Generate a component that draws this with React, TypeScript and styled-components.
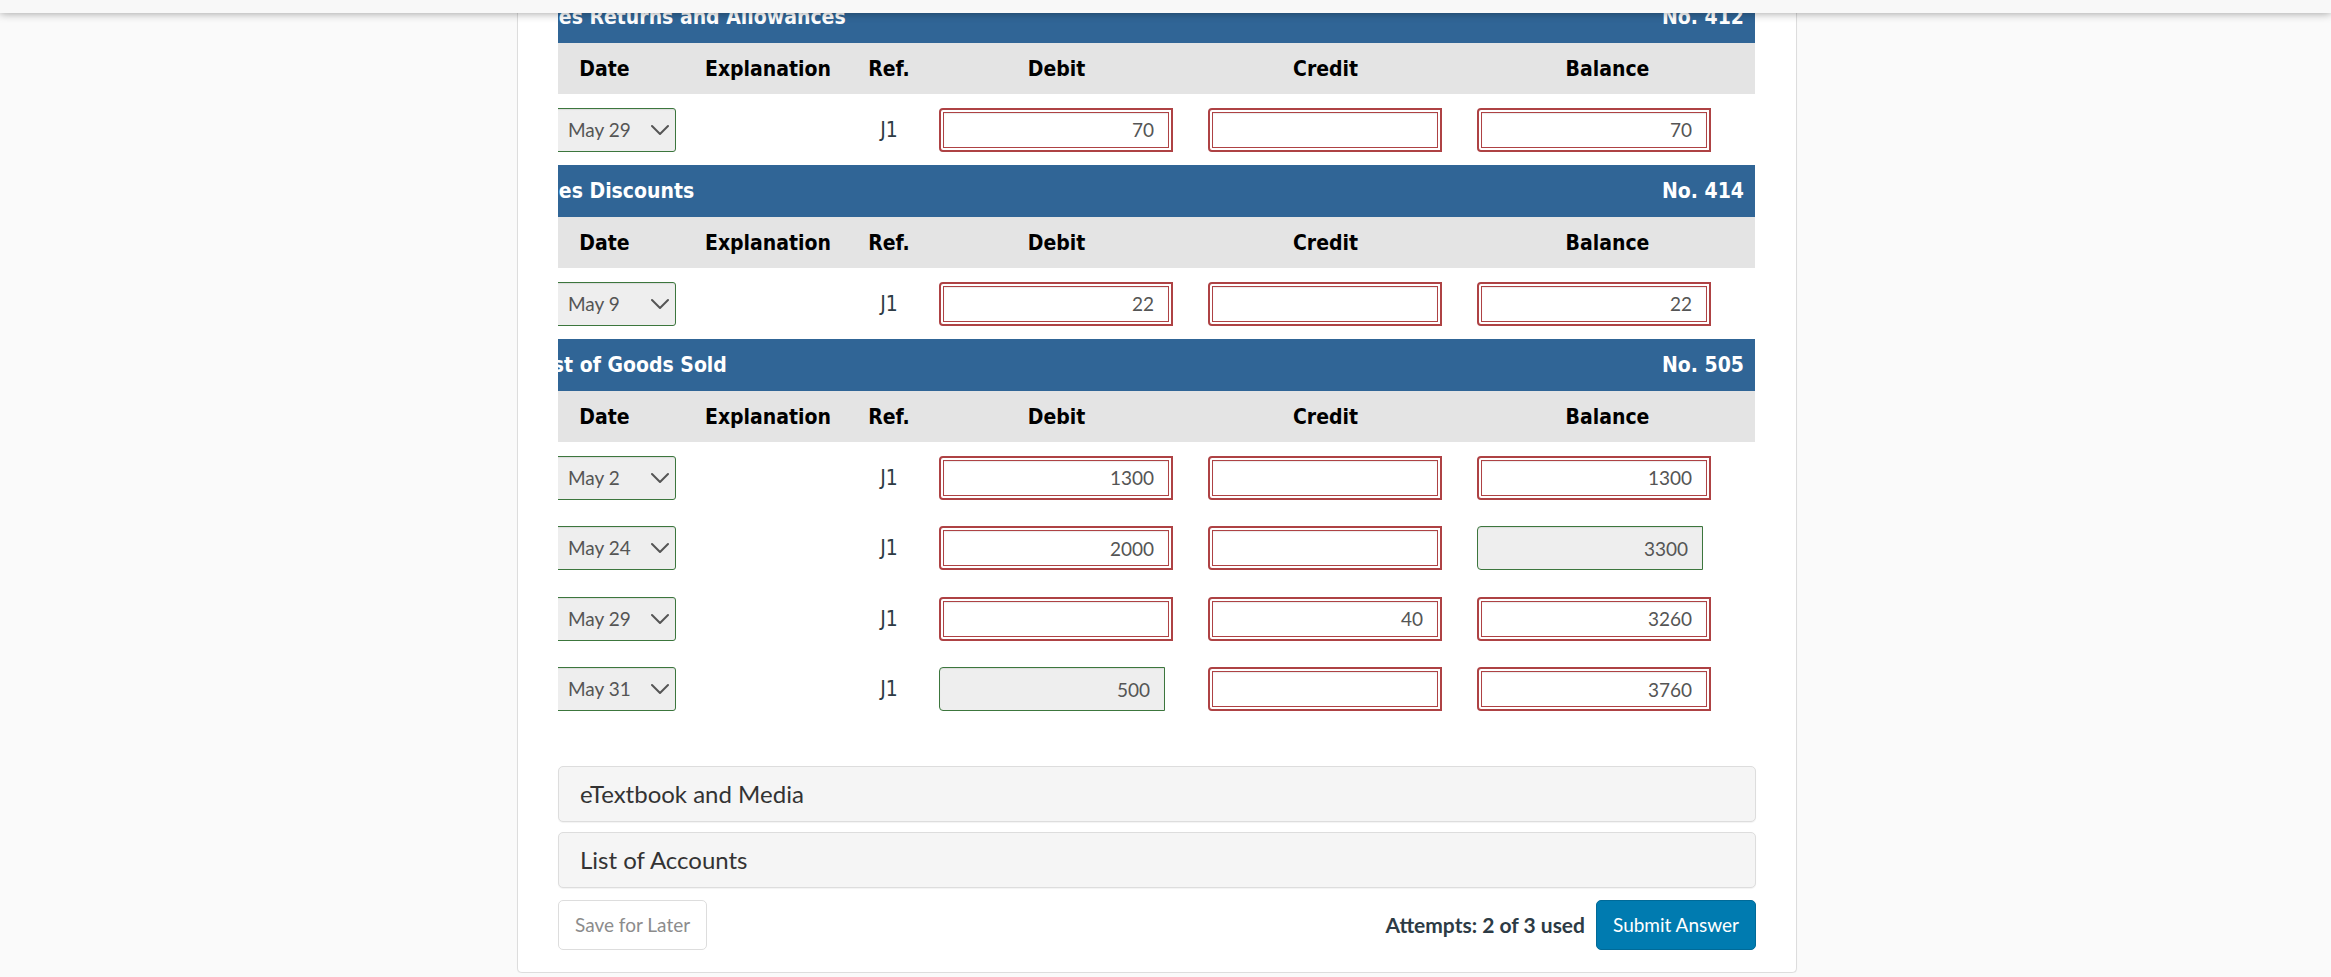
import React from "react";
import styled, { createGlobalStyle, css } from "styled-components";

const GlobalStyle = createGlobalStyle`
  *, *::before, *::after { box-sizing: border-box; }
  body {
    margin: 0;
    background: #fafafa;
    color: #2d3b45;
    font-family: Lato, "Liberation Sans", sans-serif;
  }
`;

const TopBar = styled.header`
  position: fixed;
  top: 0;
  left: 0;
  right: 0;
  z-index: 2;
  height: 13px;
  background: #f8f8f8;
  box-shadow: 0 0 10px rgba(0, 0, 0, 0.4);
`;

const Page = styled.main`
  margin-top: -9px;
  padding-right: 17px;
`;

const Card = styled.article`
  max-width: 1280px;
  margin: 0 auto;
  padding: 0 40px 22px;
  background: #fff;
  border: 1px solid #ddd;
  border-top: 0;
  border-radius: 0 0 5px 5px;
  box-shadow: 0 1px 1px rgba(0, 0, 0, 0.05);
`;

const LedgerScroller = styled.section`
  overflow: hidden;
  margin: 0 1px 42px 0;
`;

const Ledger = styled.table`
  width: calc(100% + 41px);
  margin-left: -41px;
  border-collapse: collapse;
  table-layout: fixed;
  font-family: "DejaVu Sans Condensed", "DejaVu Sans", sans-serif;
  font-size: 21px;
  line-height: 24px;
`;

const Col = styled.col<{ $width?: number }>`
  width: ${(p) => (p.$width ? `${p.$width}px` : "auto")};
`;

const TitleRow = styled.tr`
  height: 52px;
  background: #306596;
  color: #fff;
`;

const TitleCell = styled.th<{ $end?: boolean }>`
  padding: 0 11px 0 9px;
  text-align: ${(p) => (p.$end ? "right" : "left")};
  white-space: nowrap;
`;

const HeadRow = styled.tr`
  height: 51px;
  background: #e4e4e4;
  color: #000;
`;

const HeadCell = styled.th`
  padding: 0;

  &:first-child {
    padding-left: 12px;
  }
`;

const EntryRow = styled.tr`
  height: 71px;

  &:nth-child(even) {
    height: 70px;
  }
`;

const Cell = styled.td<{ $center?: boolean }>`
  padding: ${(p) => (p.$center ? "0" : "0 17px")};
  text-align: ${(p) => (p.$center ? "center" : "left")};

  &:first-child {
    padding: 0 4px 0 12px;
  }
`;

const DateBox = styled.div`
  position: relative;
`;

const DateSelect = styled.select`
  display: block;
  width: 100%;
  height: 44px;
  padding: 0 32px 0 38px;
  appearance: none;
  background: #eee;
  border: 1px solid #3c763d;
  border-radius: 3px;
  box-shadow: inset 0 1px 1px rgba(0, 0, 0, 0.08);
  color: #555;
  font: 19px/24px Lato, sans-serif;
`;

const Chevron = styled.svg`
  position: absolute;
  top: 16px;
  right: 7px;
  width: 18px;
  height: 12px;
  fill: none;
  stroke: #555;
  stroke-width: 2;
  stroke-linecap: round;
  stroke-linejoin: round;
  pointer-events: none;
`;

type Mark = "right" | "wrong";

const AmountFrame = styled.div<{ $mark: Mark }>`
  height: 44px;
  ${(p) =>
    p.$mark === "wrong"
      ? css`
          width: 234px;
          padding: 2px;
          border: 2px solid #ae4244;
          border-radius: 4px 0 0 4px;
        `
      : css`
          width: 226px;
        `}
`;

const AmountInput = styled.input<{ $mark: Mark }>`
  display: block;
  width: 100%;
  height: 100%;
  padding: 0 14px;
  border: 1px solid ${(p) => (p.$mark === "wrong" ? "#ae4244" : "#3c763d")};
  border-radius: ${(p) => (p.$mark === "wrong" ? "0" : "4px 0 0 4px")};
  background: ${(p) => (p.$mark === "wrong" ? "#fff" : "#eee")};
  box-shadow: inset 0 1px 1px rgba(0, 0, 0, 0.08);
  color: #555;
  font: 19px/24px Lato, sans-serif;
  text-align: right;
`;

const PanelButton = styled.button`
  display: block;
  width: 100%;
  height: 56px;
  margin-bottom: 10px;
  padding: 0 21px;
  background: #f5f5f5;
  border: 1px solid #ddd;
  border-radius: 5px;
  box-shadow: 0 1px 1px rgba(0, 0, 0, 0.05);
  color: #333;
  font: 24px/32px Lato, sans-serif;
  text-align: left;
`;

const Footer = styled.footer`
  display: flex;
  align-items: center;
  gap: 11px;
  margin-top: 12px;
`;

const Attempts = styled.strong`
  margin-left: auto;
  font-size: 21px;
  line-height: 24px;
`;

const ActionButton = styled.button<{ $primary?: boolean }>`
  height: 50px;
  padding: 0 16px;
  border: 1px solid ${(p) => (p.$primary ? "#006a98" : "#ddd")};
  border-radius: 5px;
  background: ${(p) => (p.$primary ? "#007bb0" : "#fff")};
  color: ${(p) => (p.$primary ? "#fff" : "#8c8c8c")};
  font: 19px/24px Lato, sans-serif;
`;

type Amount = { value: string; mark: Mark };
type Entry = { date: string; debit: Amount; credit: Amount; balance: Amount };
type Account = { title: string; number: string; entries: Entry[] };

const wrong = (value = ""): Amount => ({ value, mark: "wrong" });
const right = (value: string): Amount => ({ value, mark: "right" });

const accounts: Account[] = [
  {
    title: "Sales Returns and Allowances",
    number: "No. 412",
    entries: [{ date: "May 29", debit: wrong("70"), credit: wrong(), balance: wrong("70") }],
  },
  {
    title: "Sales Discounts",
    number: "No. 414",
    entries: [{ date: "May 9", debit: wrong("22"), credit: wrong(), balance: wrong("22") }],
  },
  {
    title: "Cost of Goods Sold",
    number: "No. 505",
    entries: [
      { date: "May 2", debit: wrong("1300"), credit: wrong(), balance: wrong("1300") },
      { date: "May 24", debit: wrong("2000"), credit: wrong(), balance: right("3300") },
      { date: "May 29", debit: wrong(), credit: wrong("40"), balance: wrong("3260") },
      { date: "May 31", debit: right("500"), credit: wrong(), balance: wrong("3760") },
    ],
  },
];

const headings = ["Date", "Explanation", "Ref.", "Debit", "Credit", "Balance"];

function AmountField({ label, amount }: { label: string; amount: Amount }) {
  return (
    <AmountFrame $mark={amount.mark}>
      <AmountInput
        type="text"
        aria-label={label}
        defaultValue={amount.value}
        readOnly={amount.mark === "right"}
        $mark={amount.mark}
      />
    </AmountFrame>
  );
}

function EntryLine({ account, entry }: { account: string; entry: Entry }) {
  const label = `${account}, ${entry.date}`;
  return (
    <EntryRow>
      <Cell>
        <DateBox>
          <DateSelect aria-label={`${label}, date`} defaultValue={entry.date}>
            <option>{entry.date}</option>
          </DateSelect>
          <Chevron viewBox="0 0 18 12" aria-hidden="true">
            <path d="M1 2 L9 10 L17 2" />
          </Chevron>
        </DateBox>
      </Cell>
      <Cell />
      <Cell $center>J1</Cell>
      <Cell>
        <AmountField label={`${label}, debit`} amount={entry.debit} />
      </Cell>
      <Cell>
        <AmountField label={`${label}, credit`} amount={entry.credit} />
      </Cell>
      <Cell>
        <AmountField label={`${label}, balance`} amount={entry.balance} />
      </Cell>
    </EntryRow>
  );
}

function AccountLedger({ account }: { account: Account }) {
  return (
    <Ledger>
      <colgroup>
        <Col $width={163} />
        <Col $width={176} />
        <Col $width={66} />
        <Col $width={269} />
        <Col $width={269} />
        <Col />
      </colgroup>
      <thead>
        <TitleRow>
          <TitleCell colSpan={5}>{account.title}</TitleCell>
          <TitleCell $end>{account.number}</TitleCell>
        </TitleRow>
        <HeadRow>
          {headings.map((h) => (
            <HeadCell key={h} scope="col">
              {h}
            </HeadCell>
          ))}
        </HeadRow>
      </thead>
      <tbody>
        {account.entries.map((entry) => (
          <EntryLine key={entry.date} account={account.title} entry={entry} />
        ))}
      </tbody>
    </Ledger>
  );
}

export default function App() {
  return (
    <>
      <GlobalStyle />
      <TopBar />
      <Page>
        <Card>
          <LedgerScroller>
            {accounts.map((account) => (
              <AccountLedger key={account.number} account={account} />
            ))}
          </LedgerScroller>
          <PanelButton type="button">eTextbook and Media</PanelButton>
          <PanelButton type="button">List of Accounts</PanelButton>
          <Footer>
            <ActionButton type="button">Save for Later</ActionButton>
            <Attempts>Attempts: 2 of 3 used</Attempts>
            <ActionButton type="button" $primary>
              Submit Answer
            </ActionButton>
          </Footer>
        </Card>
      </Page>
    </>
  );
}
